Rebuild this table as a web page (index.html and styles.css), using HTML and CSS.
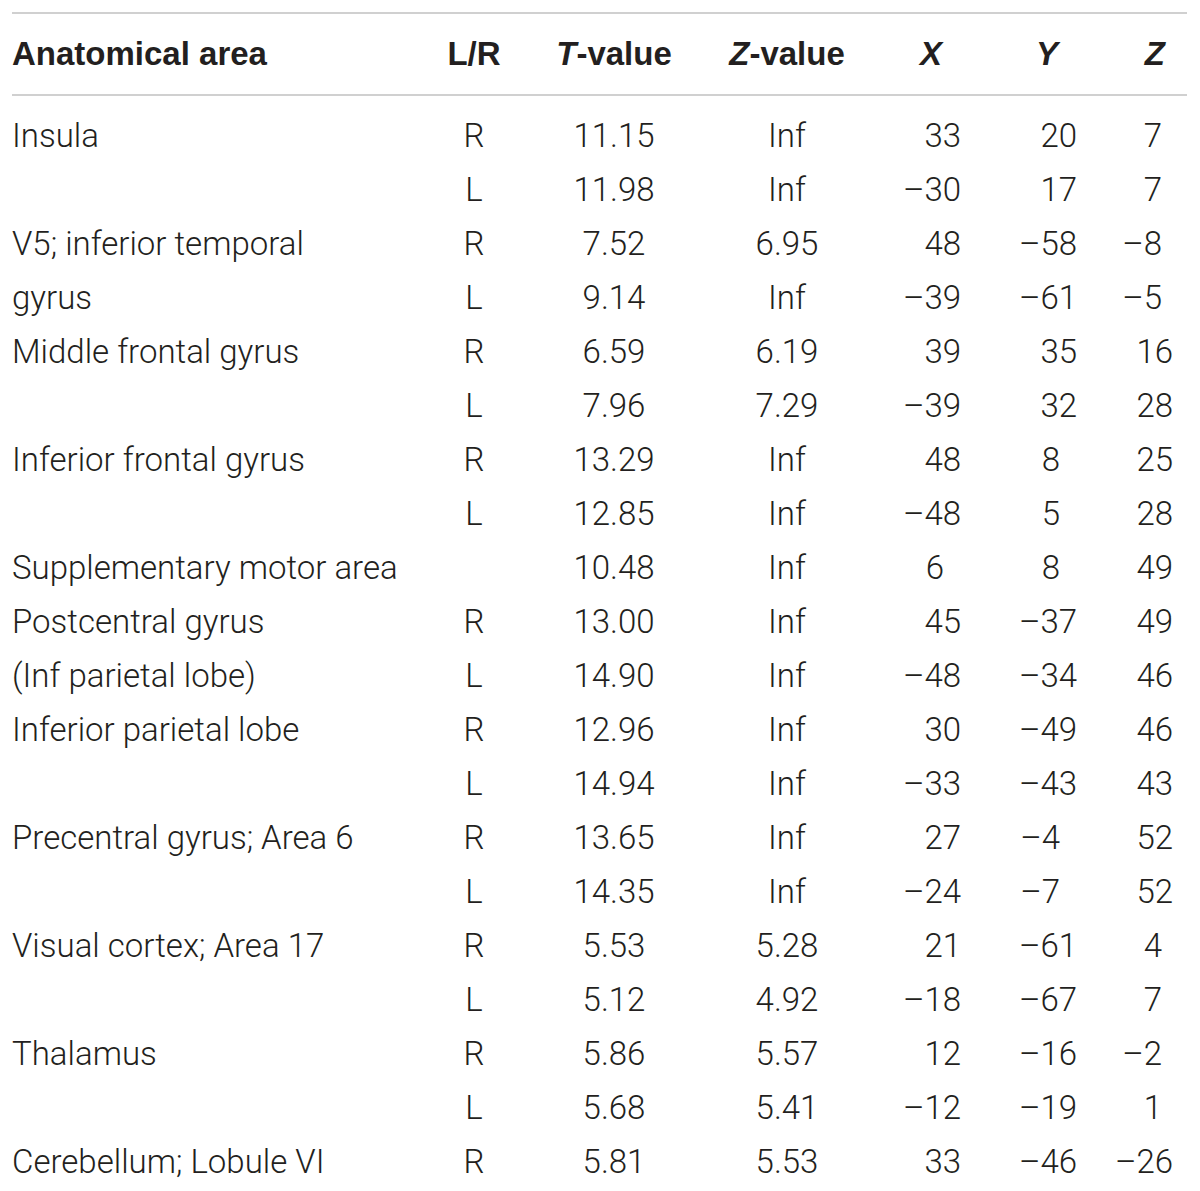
FILE: index.html
```html
<!DOCTYPE html>
<html>
<head>
<meta charset="utf-8">
<link rel="stylesheet" href="styles.css">
</head>
<body>
<div class="wrap">
<table class="tbl">
<colgroup>
<col class="c-area"><col class="c-lr"><col class="c-t"><col class="c-zv"><col class="c-x"><col class="c-y"><col class="c-z">
</colgroup>
<thead>
<tr>
<th class="area">Anatomical area</th>
<th class="lr">L/R</th>
<th class="tv"><i>T</i>-value</th>
<th class="zv"><i>Z</i>-value</th>
<th class="x"><i>X</i></th>
<th class="y"><i>Y</i></th>
<th class="z"><i>Z</i></th>
</tr>
</thead>
<tbody>
<tr class="first"><td class="area">Insula</td><td class="lr">R</td><td class="tv">11.15</td><td class="zv">Inf</td><td class="x">33</td><td class="y">20</td><td class="z s">7</td></tr>
<tr><td class="area"></td><td class="lr">L</td><td class="tv">11.98</td><td class="zv">Inf</td><td class="x">–30</td><td class="y">17</td><td class="z s">7</td></tr>
<tr><td class="area">V5; inferior temporal</td><td class="lr">R</td><td class="tv">7.52</td><td class="zv">6.95</td><td class="x">48</td><td class="y">–58</td><td class="z s">–8</td></tr>
<tr><td class="area">gyrus</td><td class="lr">L</td><td class="tv">9.14</td><td class="zv">Inf</td><td class="x">–39</td><td class="y">–61</td><td class="z s">–5</td></tr>
<tr><td class="area">Middle frontal gyrus</td><td class="lr">R</td><td class="tv">6.59</td><td class="zv">6.19</td><td class="x">39</td><td class="y">35</td><td class="z">16</td></tr>
<tr><td class="area"></td><td class="lr">L</td><td class="tv">7.96</td><td class="zv">7.29</td><td class="x">–39</td><td class="y">32</td><td class="z">28</td></tr>
<tr><td class="area">Inferior frontal gyrus</td><td class="lr">R</td><td class="tv">13.29</td><td class="zv">Inf</td><td class="x">48</td><td class="y s">8</td><td class="z">25</td></tr>
<tr><td class="area"></td><td class="lr">L</td><td class="tv">12.85</td><td class="zv">Inf</td><td class="x">–48</td><td class="y s">5</td><td class="z">28</td></tr>
<tr><td class="area">Supplementary motor area</td><td class="lr"></td><td class="tv">10.48</td><td class="zv">Inf</td><td class="x s">6</td><td class="y s">8</td><td class="z">49</td></tr>
<tr><td class="area">Postcentral gyrus</td><td class="lr">R</td><td class="tv">13.00</td><td class="zv">Inf</td><td class="x">45</td><td class="y">–37</td><td class="z">49</td></tr>
<tr><td class="area">(Inf parietal lobe)</td><td class="lr">L</td><td class="tv">14.90</td><td class="zv">Inf</td><td class="x">–48</td><td class="y">–34</td><td class="z">46</td></tr>
<tr><td class="area">Inferior parietal lobe</td><td class="lr">R</td><td class="tv">12.96</td><td class="zv">Inf</td><td class="x">30</td><td class="y">–49</td><td class="z">46</td></tr>
<tr><td class="area"></td><td class="lr">L</td><td class="tv">14.94</td><td class="zv">Inf</td><td class="x">–33</td><td class="y">–43</td><td class="z">43</td></tr>
<tr><td class="area">Precentral gyrus; Area 6</td><td class="lr">R</td><td class="tv">13.65</td><td class="zv">Inf</td><td class="x">27</td><td class="y s">–4</td><td class="z">52</td></tr>
<tr><td class="area"></td><td class="lr">L</td><td class="tv">14.35</td><td class="zv">Inf</td><td class="x">–24</td><td class="y s">–7</td><td class="z">52</td></tr>
<tr><td class="area">Visual cortex; Area 17</td><td class="lr">R</td><td class="tv">5.53</td><td class="zv">5.28</td><td class="x">21</td><td class="y">–61</td><td class="z s">4</td></tr>
<tr><td class="area"></td><td class="lr">L</td><td class="tv">5.12</td><td class="zv">4.92</td><td class="x">–18</td><td class="y">–67</td><td class="z s">7</td></tr>
<tr><td class="area">Thalamus</td><td class="lr">R</td><td class="tv">5.86</td><td class="zv">5.57</td><td class="x">12</td><td class="y">–16</td><td class="z s">–2</td></tr>
<tr><td class="area"></td><td class="lr">L</td><td class="tv">5.68</td><td class="zv">5.41</td><td class="x">–12</td><td class="y">–19</td><td class="z s">1</td></tr>
<tr><td class="area">Cerebellum; Lobule VI</td><td class="lr">R</td><td class="tv">5.81</td><td class="zv">5.53</td><td class="x">33</td><td class="y">–46</td><td class="z">–26</td></tr>
</tbody>
</table>
</div>
</body>
</html>
```
FILE: styles.css
```css
html, body {
  margin: 0;
  padding: 0;
  background: #ffffff;
}
.wrap {
  padding: 12px 13px 0 12px;
}
.tbl {
  width: 1175px;
  border-collapse: collapse;
  table-layout: fixed;
  font-family: Roboto, "Liberation Sans", sans-serif;
  font-weight: 300;
  font-size: 33px;
  color: #231f20;
}
.c-area { width: 408px; }
.c-lr { width: 108px; }
.c-t { width: 172px; }
.c-zv { width: 174px; }
.c-x { width: 111px; }
.c-y { width: 115px; }
.c-z { width: 87px; }

.tbl thead tr {
  border-top: 2px solid #d0d0d0;
  border-bottom: 2px solid #d0d0d0;
}
.tbl th {
  font-family: "Liberation Sans", Arial, sans-serif;
  font-weight: 700;
  font-size: 33px;
  height: 80px;
  padding: 0;
  line-height: 36px;
  vertical-align: middle;
}
.tbl th i { font-style: italic; }
.tbl td {
  height: 54px;
  padding: 0;
  line-height: 54px;
  white-space: nowrap;
}
.tbl tr.first td {
  padding-top: 13px;
}
.area { text-align: left; }
.lr, .tv, .zv { text-align: center; }
th.area { text-align: left; }
th.lr, th.tv, th.zv { text-align: center; }
.x, .y, .z { text-align: right; }

td.x { padding-right: 24px; }
td.y { padding-right: 23px; }
td.z { padding-right: 14px; }
td.x.s { padding-right: 41px; }
td.y.s { padding-right: 40px; }
td.z.s { padding-right: 25px; }

th.x { padding-right: 43px; }
th.y { padding-right: 42px; }
th.z { padding-right: 22px; }
```
